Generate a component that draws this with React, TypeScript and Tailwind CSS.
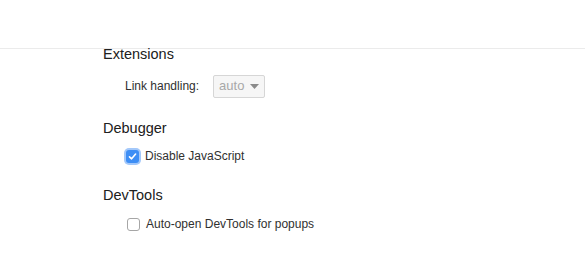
const font = "font-['Liberation_Sans','Helvetica',Arial,sans-serif]";

function Checkbox({ checked }: { checked?: boolean }) {
  if (checked) {
    return (
      <span className="flex h-[13px] w-[13px] items-center justify-center rounded-[3px] bg-[#3d8ef5] shadow-[0_0_0_2px_#a3c8fa]">
        <svg width="9" height="9" viewBox="0 0 9 9" fill="none">
          <path d="M1.5 4.8 L3.6 6.8 L7.6 2" stroke="white" strokeWidth="1.6" strokeLinecap="round" strokeLinejoin="round" />
        </svg>
      </span>
    );
  }
  return <span className="h-[13px] w-[13px] rounded-[3px] border border-[#a6a6a6] bg-white" />;
}

export default function App() {
  return (
    <div className={`h-[264px] w-[585px] overflow-hidden bg-white ${font}`}>
      <div className="h-[49px] border-b border-[#ebebeb]" />

      <div className="pl-[103px]">
        <h2 className="mt-[-4px] text-[14.5px] leading-[18px] text-[#202020]">Extensions</h2>
        <div className="mt-[12px] flex h-[22px] items-center pl-[22px]">
          <span className="text-[12px] leading-[16px] text-[#303030]">Link handling:</span>
          <div className="ml-[14px] flex h-[23px] w-[52px] items-center rounded-[2px] border border-[#d6d6d6] bg-[#f6f6f6] pl-[5px]">
            <span className="text-[13px] leading-[16px] text-[#a8a8a8]">auto</span>
            <svg className="ml-[6px]" width="9" height="5" viewBox="0 0 9 5">
              <path d="M0 0 H9 L4.5 5 Z" fill="#8a8a8a" />
            </svg>
          </div>
        </div>

        <h2 className="mt-[22px] text-[14.5px] leading-[18px] text-[#202020]">Debugger</h2>
        <div className="mt-[11px] flex h-[16px] items-center gap-[6px] pl-[23px]">
          <Checkbox checked />
          <span className="text-[12px] leading-[16px] text-[#303030]">Disable JavaScript</span>
        </div>

        <h2 className="mt-[22px] text-[14.5px] leading-[18px] text-[#202020]">DevTools</h2>
        <div className="mt-[12px] flex h-[16px] items-center gap-[6px] pl-[24px]">
          <Checkbox />
          <span className="text-[12px] leading-[16px] text-[#303030]">Auto-open DevTools for popups</span>
        </div>
      </div>
    </div>
  );
}
